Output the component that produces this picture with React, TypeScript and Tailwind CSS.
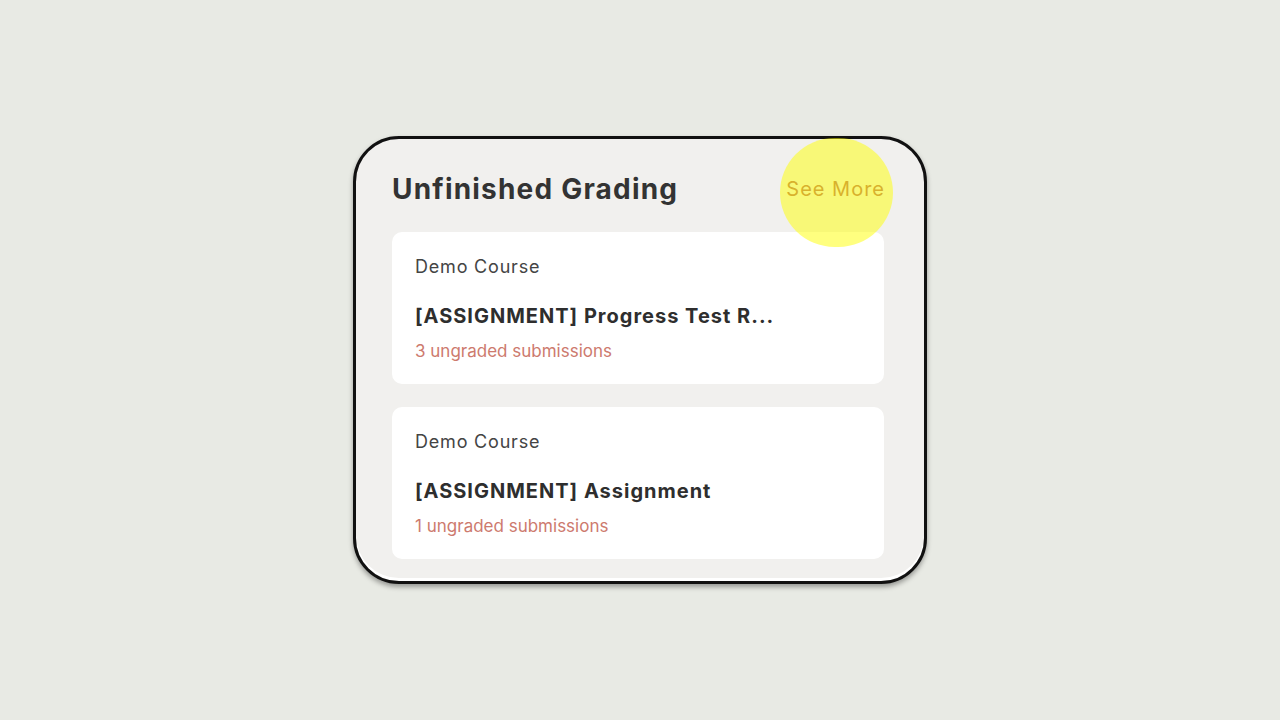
const items = [
  { course: "Demo Course", title: "[ASSIGNMENT] Progress Test R...", ungraded: 3 },
  { course: "Demo Course", title: "[ASSIGNMENT] Assignment", ungraded: 1 },
];

function GradingCard({ course, title, ungraded }: { course: string; title: string; ungraded: number }) {
  return (
    <div className="bg-white rounded-[10px] h-[152px] pl-[23px] pr-6 pt-[24px]">
      <div className="text-[18px] leading-[22px] text-[#444444] tracking-[0.8px]">{course}</div>
      <div className="mt-[26px] text-[20px] leading-[24px] font-bold text-[#2e2e2e] tracking-[1px] truncate">{title}</div>
      <div className="mt-[12px] text-[17px] leading-[22px] text-[#cd7a6e]">{ungraded} ungraded submissions</div>
    </div>
  );
}

export default function App() {
  return (
    <div
      className="w-[1280px] h-[720px] bg-[#e8eae4] flex items-start justify-center pt-[136px]"
      style={{ fontFamily: "Inter, 'Open Sans', sans-serif" }}
    >
      <div className="w-[574px] h-[448px] rounded-[46px] border-[3px] border-[#111111] bg-[#f1f0ee] shadow-[0_3px_5px_rgba(0,0,0,0.35),inset_0_-3px_0_#ffffff] pl-[36px] pr-[40px] pt-[30px]">
        <div className="relative flex items-center justify-between h-[40px]">
          <h2 className="text-[28px] font-bold text-[#333333] tracking-[1.2px]">Unfinished Grading</h2>
          <span className="text-[20px] text-[#b0625a] tracking-[1px] mr-[-1px]">See More</span>
          <div className="absolute right-[-9px] top-[-31px] w-[113px] h-[109px] rounded-full bg-[rgba(255,255,0,0.5)]" />
        </div>
        <div className="mt-[23px] flex flex-col gap-[23px]">
          {items.map((it, i) => (
            <GradingCard key={i} {...it} />
          ))}
        </div>
      </div>
    </div>
  );
}
